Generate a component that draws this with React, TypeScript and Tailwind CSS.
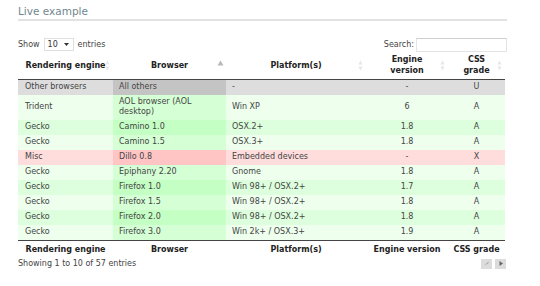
import React from 'react';

type Row = {
  engine: string;
  browser: string;
  platform: string;
  version: string;
  grade: string;
};

const rows: Row[] = [
  { engine: 'Other browsers', browser: 'All others', platform: '-', version: '-', grade: 'U' },
  { engine: 'Trident', browser: 'AOL browser (AOL desktop)', platform: 'Win XP', version: '6', grade: 'A' },
  { engine: 'Gecko', browser: 'Camino 1.0', platform: 'OSX.2+', version: '1.8', grade: 'A' },
  { engine: 'Gecko', browser: 'Camino 1.5', platform: 'OSX.3+', version: '1.8', grade: 'A' },
  { engine: 'Misc', browser: 'Dillo 0.8', platform: 'Embedded devices', version: '-', grade: 'X' },
  { engine: 'Gecko', browser: 'Epiphany 2.20', platform: 'Gnome', version: '1.8', grade: 'A' },
  { engine: 'Gecko', browser: 'Firefox 1.0', platform: 'Win 98+ / OSX.2+', version: '1.7', grade: 'A' },
  { engine: 'Gecko', browser: 'Firefox 1.5', platform: 'Win 98+ / OSX.2+', version: '1.8', grade: 'A' },
  { engine: 'Gecko', browser: 'Firefox 2.0', platform: 'Win 98+ / OSX.2+', version: '1.8', grade: 'A' },
  { engine: 'Gecko', browser: 'Firefox 3.0', platform: 'Win 2k+ / OSX.3+', version: '1.9', grade: 'A' },
];

// row / sorted-column colours per grade, odd and even
const rowBg: Record<string, [string, string]> = {
  U: ['bg-[#dddddd]', 'bg-[#eeeeee]'],
  A: ['bg-[#ddffdd]', 'bg-[#eeffee]'],
  X: ['bg-[#ffdddd]', 'bg-[#ffeeee]'],
};
const sortedBg: Record<string, [string, string]> = {
  U: ['bg-[#c4c4c4]', 'bg-[#d5d5d5]'],
  A: ['bg-[#c4ffc4]', 'bg-[#d5ffd5]'],
  X: ['bg-[#ffc4c4]', 'bg-[#ffd5d5]'],
};

function SortIcon({ active }: { active?: boolean }) {
  if (active) {
    return (
      <svg width="7" height="6" viewBox="0 0 7 6" className="absolute right-[2px] top-[8px]">
        <path d="M3.5 0.5 L6.5 5.5 L0.5 5.5 Z" fill="#b8b8b8" />
      </svg>
    );
  }
  return (
    <svg width="5" height="11" viewBox="0 0 5 11" className="absolute right-[3px] top-[8px]">
      <path d="M2.5 0.5 L4.5 4.5 L0.5 4.5 Z" fill="#e6e6e6" />
      <path d="M2.5 10.5 L4.5 6.5 L0.5 6.5 Z" fill="#e6e6e6" />
    </svg>
  );
}

function App() {
  return (
    <div className="w-[540px] h-[286px] bg-white text-[8px] text-[#444] overflow-hidden" style={{ fontFamily: '"DejaVu Sans", Verdana, sans-serif' }}>
      <div className="ml-[18px] w-[489px]">
        {/* Title */}
        <div className="pt-[5px] pb-[1px] text-[10.5px] leading-[13px] text-[#72878f] border-b-2 border-[#e2e2e2]">
          Live example
        </div>

        {/* Controls */}
        <div className="mt-[16px] w-[487px] h-[15px] flex items-center justify-between">
          <div className="flex items-center">
            <span>Show</span>
            <div className="ml-[4px] w-[30px] h-[13px] border border-[#e0e0e0] bg-white flex items-center justify-between pl-[3px] pr-[4px] text-[#333]">
              <span>10</span>
              <svg width="5" height="3" viewBox="0 0 5 3">
                <path d="M0 0 L5 0 L2.5 3 Z" fill="#333" />
              </svg>
            </div>
            <span className="ml-[4px]">entries</span>
          </div>
          <div className="flex items-center mr-[-2px]">
            <span>Search:</span>
            <div className="ml-[2px] w-[91px] h-[14px] border border-[#e4e4e4] border-t-[#cfcfcf] bg-white" />
          </div>
        </div>

        {/* Table */}
        <table className="w-[487px] table-fixed border-collapse">
          <colgroup>
            <col className="w-[95px]" />
            <col className="w-[113px]" />
            <col className="w-[140px]" />
            <col className="w-[82px]" />
            <col className="w-[57px]" />
          </colgroup>
          <thead>
            <tr className="h-[27px] border-b border-[#444] text-[#222]">
              <th className="relative font-bold leading-[11px] px-[6px] text-center">Rendering engine<SortIcon /></th>
              <th className="relative font-bold leading-[11px] px-[6px] text-center">Browser<SortIcon active /></th>
              <th className="relative font-bold leading-[11px] px-[6px] text-center">Platform(s)<SortIcon /></th>
              <th className="relative font-bold leading-[11px] px-[12px] text-center">Engine version<SortIcon /></th>
              <th className="relative font-bold leading-[11px] px-[12px] text-center">CSS grade<SortIcon /></th>
            </tr>
          </thead>
          <tbody>
            {rows.map((r, i) => {
              const parity = i % 2 === 0 ? 0 : 1;
              const bg = rowBg[r.grade][parity];
              const sbg = sortedBg[r.grade][parity];
              return (
                <tr key={i} className={`${bg} h-[15px]`}>
                  <td className="pl-[7px] pr-[4px] pt-[2px] pb-[3px] leading-[10px] align-middle">{r.engine}</td>
                  <td className={`pl-[6px] pr-[4px] pt-[2px] pb-[3px] leading-[10px] align-middle ${sbg}`}>{r.browser}</td>
                  <td className="pl-[6px] pr-[4px] pt-[2px] pb-[3px] leading-[10px] align-middle">{r.platform}</td>
                  <td className="pt-[2px] pb-[3px] leading-[10px] text-center align-middle">{r.version}</td>
                  <td className="pt-[2px] pb-[3px] leading-[10px] text-center align-middle">{r.grade}</td>
                </tr>
              );
            })}
          </tbody>
          <tfoot>
            <tr className="border-t border-[#444] text-[#222]">
              <th className="font-bold leading-[10px] pt-[4px] pb-[3px] text-center">Rendering engine</th>
              <th className="font-bold leading-[10px] pt-[4px] pb-[3px] text-center">Browser</th>
              <th className="font-bold leading-[10px] pt-[4px] pb-[3px] text-center">Platform(s)</th>
              <th className="font-bold leading-[10px] pt-[4px] pb-[3px] text-center whitespace-nowrap">Engine version</th>
              <th className="font-bold leading-[10px] pt-[4px] pb-[3px] text-center whitespace-nowrap">CSS grade</th>
            </tr>
          </tfoot>
        </table>

        {/* Info + paging */}
        <div className="w-[487px] flex items-center justify-between">
          <span className="leading-[12px]">Showing 1 to 10 of 57 entries</span>
          <div className="flex gap-[3px] mr-[-1px]">
            <div className="w-[11px] h-[10px] bg-[#dcdcdc] flex items-center justify-center">
              <svg width="5" height="5" viewBox="0 0 5 5">
                <path d="M0.5 4.5 L4.5 0.5 L4.5 2 Z" fill="#9a9a9a" />
              </svg>
            </div>
            <div className="w-[11px] h-[10px] bg-[#dcdcdc] flex items-center justify-center">
              <svg width="4" height="5" viewBox="0 0 4 5">
                <path d="M0.5 0 L4 2.5 L0.5 5 Z" fill="#666" />
              </svg>
            </div>
          </div>
        </div>
      </div>
    </div>
  );
}

export default App;
